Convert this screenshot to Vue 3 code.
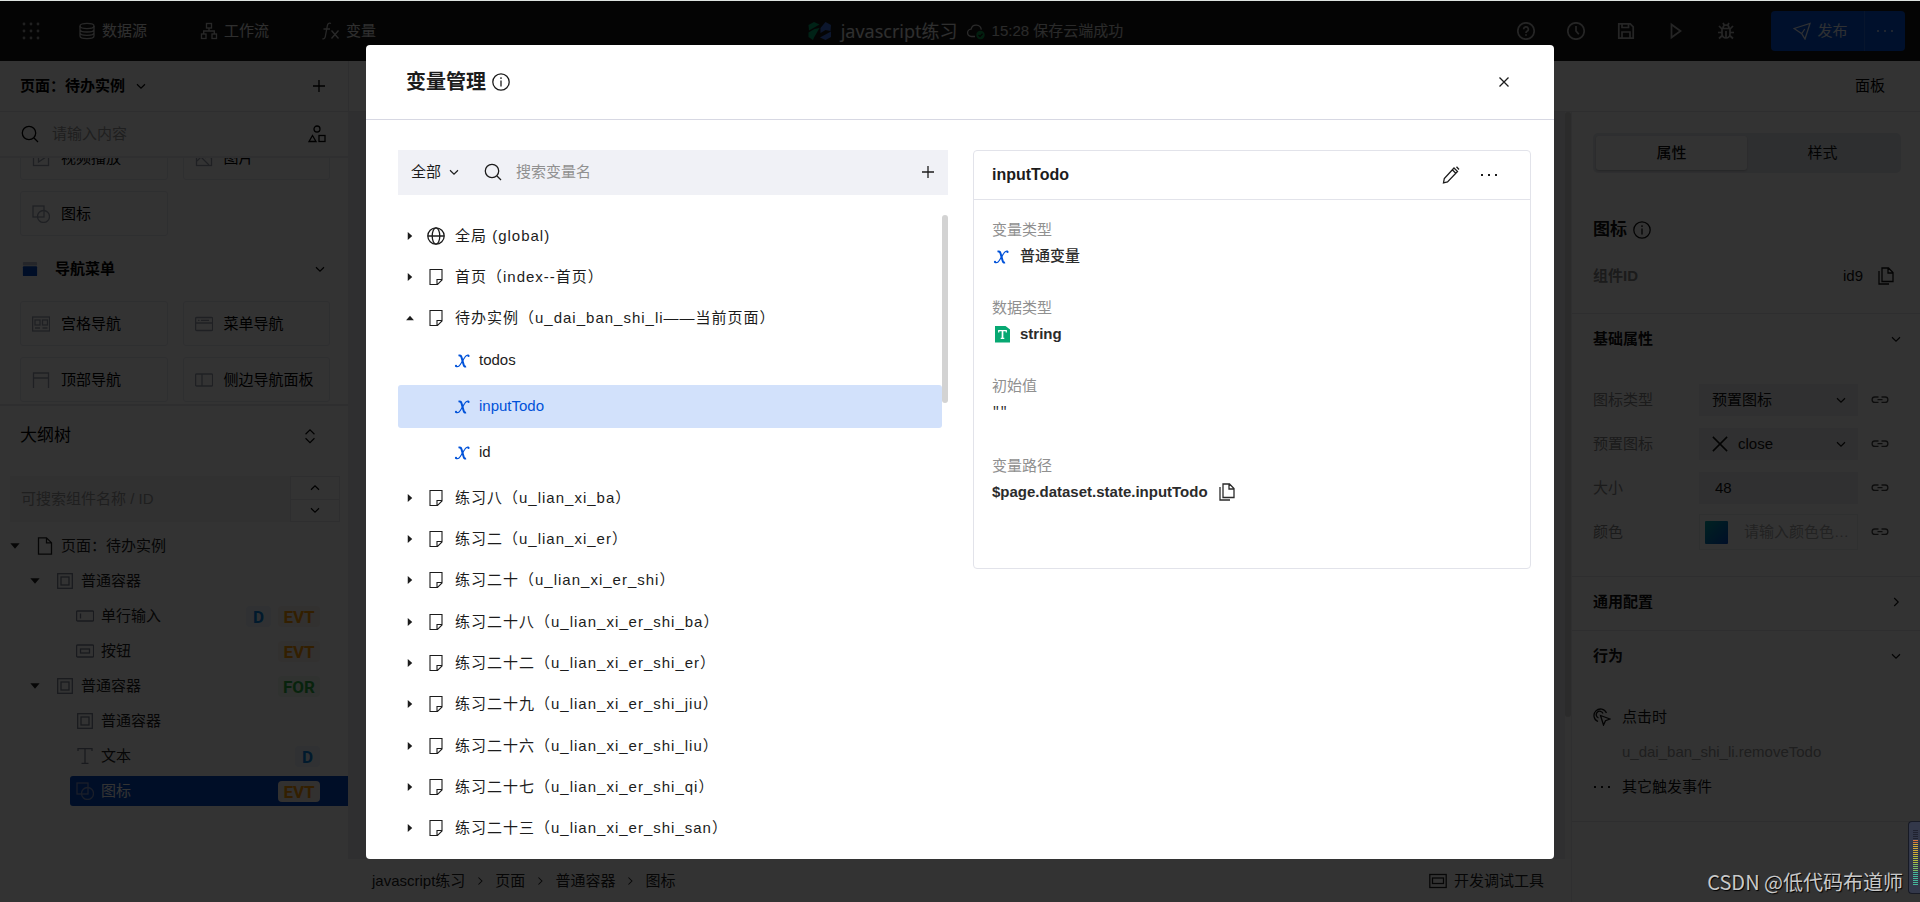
<script setup>
import { h, ref } from 'vue'

const paths = {
  apps: [2, 9, 16].flatMap(y => [2, 9, 16].map(x => `<circle cx="${x}" cy="${y}" r="1.4" fill="currentColor" stroke="none"/>`)).join(''),
  database: '<ellipse cx="9" cy="4" rx="7" ry="2.6"/><path d="M2 4v10c0 1.500 3 2.600 7 2.600s7-1.100 7-2.600V4M2 7.400c0 1.500 3 2.600 7 2.600s7-1.100 7-2.600M2 10.800c0 1.500 3 2.600 7 2.600s7-1.100 7-2.600"/>',
  flow: '<rect x="6.500" y="1.500" width="5" height="4.500"/><rect x="1.500" y="12" width="4.500" height="4.500"/><rect x="12" y="12" width="4.500" height="4.500"/><path d="M9 6v3M3.700 12V9h10.600v3"/>',
  fx: '<path d="M9 1.500c-2.200-.9-3.300.3-3.700 2.500L3.300 14.500c-.4 2-1.500 2.700-2.800 2.200M1.500 7h6.500M9.500 8.500l7 8M16.500 8.500l-7 8"/>',
  cloud: '<path d="M8 14.500H4.500a3.700 3.700 0 0 1-.4-7.400 5.200 5.200 0 0 1 10.200.6"/><circle cx="13.500" cy="13" r="4.200" fill="#0abf5b" stroke="none"/><path stroke="#111" d="M11.500 13l1.500 1.500 2.600-2.800"/>',
  help: '<circle cx="9" cy="9" r="8.200"/><path d="M6.700 7.200a2.300 2.300 0 1 1 3.300 2c-.7.400-1 .8-1 1.700M9 12.300v1.500"/>',
  clock: '<circle cx="9" cy="9" r="8.200"/><path d="M9 4v5l2.800 3.300"/>',
  save: '<path d="M1.800 1.800h11.400l3 3v11.400H1.800zM5 1.800v3.700h6.500V1.800M5 16v-6h8v6"/>',
  play: '<path d="M4.500 2.500l9 6.500-9 6.500z"/>',
  bug: '<path d="M5 6.500h8v5.500a4 4 0 0 1-8 0zM6 6a3 3 0 0 1 6 0M9 9v7M1 10.500h4M13 10.500h4M2 4l3 3M16 4l-3 3M2 16.500l3.300-3M16 16.500l-3.300-3M6 1l1.200 2M12 1l-1.200 2"/>',
  send: '<path d="M1 6.500L17 1.500l-5 15.500-3.200-5.200L1 6.500zM8.800 11.500l3-4.500"/>',
  dots: '<g fill="currentColor" stroke="none"><rect x="1" y="8" width="2" height="2"/><rect x="8" y="8" width="2" height="2"/><rect x="15" y="8" width="2" height="2"/></g>',
  down: '<path d="M4.500 7l4.500 4.500L13.500 7"/>',
  up: '<path d="M4.500 11L9 6.500l4.500 4.500"/>',
  right: '<path d="M7 4.500l4.500 4.500L7 13.500"/>',
  updown: '<path d="M4 7l5-5 5 5M4 11.500l5 5 5-5"/>',
  plus: '<path d="M9 3v12M3 9h12"/>',
  close: '<path d="M4.500 4.500l9 9M13.500 4.500l-9 9"/>',
  cross: '<path d="M1 1l16 16M17 1L1 17" stroke-width="1.700"/>',
  search: '<circle cx="8" cy="8" r="6.700"/><path d="M13 13l4 4"/>',
  shapes: '<circle cx="9" cy="4" r="3"/><path d="M4.500 10.500L8 16.500H1z"/><rect x="11" y="10.500" width="6" height="6"/>',
  video: '<rect x="1.500" y="1.500" width="15" height="15"/><path d="M6.500 5l6 4-6 4z"/>',
  image: '<rect x="1.500" y="1.500" width="15" height="15"/><path d="M2 12l4-4 8 8M10 9l3-3 3 3"/>',
  shape: '<rect x="1" y="1" width="11" height="11"/><circle cx="11.500" cy="11.500" r="6"/>',
  grid: '<rect x=".6" y="2" width="17" height="14"/><rect x="3" y="5" width="5" height="5"/><rect x="10.500" y="5" width="5" height="5"/><path d="M3 13h5M10.500 13h5"/>',
  menu: '<rect x=".6" y="2.500" width="17" height="13" rx="1"/><path d="M.6 8h17M3 5.300h1.500M6 5.300h8"/>',
  topnav: '<path d="M1.500 17V2h15v15M1.500 7h15"/>',
  sidenav: '<rect x=".6" y="3" width="17" height="12" rx="1"/><path d="M7 3v12"/>',
  page: '<path d="M2.500.8h8l5 5v11.400h-13zM10.500.8v5h5"/>',
  box: '<rect x="1.700" y="1.700" width="14.600" height="14.600"/><rect x="5" y="5" width="8" height="8"/>',
  input: '<rect x=".6" y="4" width="17" height="10" rx="1"/><path d="M4.500 6.500v5"/>',
  button: '<rect x=".6" y="3" width="17" height="12" rx="1"/><rect x="4.500" y="7" width="9" height="4"/>',
  text: '<path d="M2 4V1.700h14V4M9 1.700v14.600M5.500 16.300h7"/>',
  info: '<circle cx="9" cy="9" r="8.200"/><path d="M9 7.500v6M9 4.300v1.700"/>',
  copy: '<path d="M5 1h6.500L16 5.500v9H5zM11 1v5h5M2 4v13h10"/>',
  link: '<path d="M7.500 6H3.800a2.700 2.700 0 0 0 0 5.400H7.500M10.500 6h3.700a2.700 2.700 0 0 1 0 5.400H10.500M6.500 8.700h5"/>',
  click: '<path d="M5 13.500A6.500 6.500 0 1 1 13.500 5M5.500 10a3.500 3.500 0 1 1 4.500-4.500M7.500 7.500l9.500 3.500-4.500 1.700-2 4.300z"/>',
  globe: '<circle cx="9" cy="9" r="8.200"/><ellipse cx="9" cy="9" rx="3.800" ry="8.200"/><path d="M.8 9h16.400"/>',
  note: '<path stroke-width="1.100" d="M3 1.500h12v10.500L10.500 16.500H3zM10 16v-4.500h5"/>',
  edit: '<path d="M12 2l3.500 3.500L5.500 16l-4 1 .8-4.500zM14.500.8l2.500 2.700M10.500 4l3.300 3.300"/>',
  x: '<path stroke-width="2" d="M5.500 4.600c1.700-.6 2.500.1 3 1.700l2.200 7.700c.4 1.400 1.100 1.800 2.300 1.300"/><path stroke-width="1.200" d="M15.700 4.300c-1.500-.6-2.900.3-3.900 2L7.300 13.500c-1.200 2-2.700 2.700-4.500 1.900"/><circle cx="15.500" cy="4.900" r="1.100" fill="currentColor" stroke="none"/><circle cx="3" cy="14.900" r="1.100" fill="currentColor" stroke="none"/>',
  string: '<path stroke="none" fill="#07a872" d="M3 1h10.500L18 4.500V17.500H3z"/><path stroke="#fff" stroke-width="1.700" d="M10.500 6v7"/><path stroke="#fff" stroke-width="1.200" d="M6.700 7.600V5.700h7.600v1.900M8.700 13.300h3.600"/>',
  tri: '<path stroke="none" fill="currentColor" d="M2 5h14l-7 8z"/>',
  tool: '<rect x=".8" y="2.500" width="16.400" height="13"/><rect x="3.500" y="6" width="11" height="5.500"/>',
  logo: '<g stroke="none"><path fill="#00a870" d="M.5 3L6 0l5.500 2.500L1 8.500zM.5 10.500l6-3.500 5-1L6 15.500 5 18 .5 15z"/><path fill="#3d6fe0" d="M12.500 6L17.500 0l5.500 3-.5 6-5-1-5 3zM12 15.500l11-6V15l-5.500 3z"/></g>',
  drawer: '<g stroke="none"><rect x="1" y="1" width="16" height="4" rx="1" fill="#b9bdd0"/><rect x="1" y="6" width="16" height="11" rx="1" fill="#0045c4"/></g>',
}

const Icon = (p) => h('svg', {
  width: p.w || p.size || 18, height: p.size || 18, viewBox: `0 0 ${p.w || 18} 18`,
  fill: 'none', stroke: 'currentColor', 'stroke-width': 1.3, 'aria-hidden': 'true', innerHTML: paths[p.name],
})
Icon.props = ['name', 'size', 'w']

const navs = [['database', '数据源'], ['flow', '工作流'], ['fx', '变量']]
const tools = [['help', '帮助'], ['clock', '历史'], ['save', '保存'], ['play', '预览'], ['bug', '调试']]
const media = [['video', '视频播放'], ['image', '图片'], ['shape', '图标']]
const navCards = [['grid', '宫格导航'], ['menu', '菜单导航'], ['topnav', '顶部导航'], ['sidenav', '侧边导航面板']]
const outline = [
  { level: 0, icon: 'page', text: '页面：待办实例', open: true },
  { level: 1, icon: 'box', text: '普通容器', open: true },
  { level: 2, icon: 'input', text: '单行输入', tags: ['D', 'EVT'] },
  { level: 2, icon: 'button', text: '按钮', tags: ['EVT'] },
  { level: 1, icon: 'box', text: '普通容器', open: true, tags: ['FOR'] },
  { level: 2, icon: 'box', text: '普通容器' },
  { level: 2, icon: 'text', text: '文本', tags: ['D'] },
  { level: 2, icon: 'shape', text: '图标', tags: ['EVT'], selected: true },
]
const crumbs = ['javascript练习', '页面', '普通容器', '图标']
const selectedVar = ref('inputTodo')
const groups = [
  { icon: 'globe', text: '全局 (global)' },
  { icon: 'note', text: '首页（index--首页）' },
  { icon: 'note', text: '待办实例（u_dai_ban_shi_li——当前页面）', vars: ['todos', 'inputTodo', 'id'] },
  { icon: 'note', text: '练习八（u_lian_xi_ba）' },
  { icon: 'note', text: '练习二（u_lian_xi_er）' },
  { icon: 'note', text: '练习二十（u_lian_xi_er_shi）' },
  { icon: 'note', text: '练习二十八（u_lian_xi_er_shi_ba）' },
  { icon: 'note', text: '练习二十二（u_lian_xi_er_shi_er）' },
  { icon: 'note', text: '练习二十九（u_lian_xi_er_shi_jiu）' },
  { icon: 'note', text: '练习二十六（u_lian_xi_er_shi_liu）' },
  { icon: 'note', text: '练习二十七（u_lian_xi_er_shi_qi）' },
  { icon: 'note', text: '练习二十三（u_lian_xi_er_shi_san）' },
]
</script>

<template>
  <div class="app">
    <header class="header">
      <nav class="nav">
        <button class="apps" aria-label="应用"><Icon name="apps" /></button>
        <button v-for="n in navs" :key="n[1]" class="nav-item"><Icon :name="n[0]" />{{ n[1] }}</button>
      </nav>
      <div class="project">
        <Icon name="logo" w="24" />
        <span class="project-name">javascript练习</span>
        <Icon name="cloud" class="cloud" />
        <span class="saved">15:28 保存云端成功</span>
      </div>
      <div class="tools">
        <button v-for="t in tools" :key="t[0]" class="tool" :aria-label="t[1]"><Icon :name="t[0]" /></button>
        <div class="publish">
          <button class="publish-main"><Icon name="send" />发布</button>
          <button class="publish-more" aria-label="更多"><Icon name="dots" /></button>
        </div>
      </div>
    </header>

    <div class="body">
      <aside class="left">
        <div class="page-row">
          <button class="page-name">页面：待办实例 <Icon name="down" size="16" /></button>
          <button aria-label="新建页面"><Icon name="plus" /></button>
        </div>
        <div class="find-row">
          <Icon name="search" />
          <input aria-label="搜索组件" placeholder="请输入内容">
          <button aria-label="组件"><Icon name="shapes" /></button>
        </div>
        <div class="library">
          <div class="cards media">
            <button v-for="c in media" :key="c[1]" class="card"><Icon :name="c[0]" />{{ c[1] }}</button>
          </div>
          <button class="section"><Icon name="drawer" size="16" /><span>导航菜单</span><Icon name="down" size="16" /></button>
          <div class="cards">
            <button v-for="c in navCards" :key="c[1]" class="card"><Icon :name="c[0]" />{{ c[1] }}</button>
          </div>
        </div>
        <div class="outline-head">
          <span>大纲树</span>
          <button aria-label="展开"><Icon name="updown" size="16" /></button>
        </div>
        <div class="outline-find">
          <input aria-label="搜索大纲" placeholder="可搜索组件名称 / ID">
          <div class="stepper">
            <button aria-label="上一个"><Icon name="up" size="16" /></button>
            <button aria-label="下一个"><Icon name="down" size="16" /></button>
          </div>
        </div>
        <ul class="outline">
          <li v-for="(o, i) in outline" :key="i" :class="['level' + o.level, { selected: o.selected }]">
            <Icon v-if="o.open" name="tri" size="12" class="tri" />
            <Icon :name="o.icon" class="kind" />
            <span class="label">{{ o.text }}</span>
            <span v-for="t in o.tags" :key="t" class="tag" :class="'tag-' + t">{{ t }}</span>
          </li>
        </ul>
      </aside>

      <div class="main">
        <div class="toolbar"><button>面板</button></div>
        <div class="work">
          <section class="center">
            <div class="canvas"><div class="canvas-bar"><div class="canvas-thumb"></div></div></div>
            <footer class="footer">
              <nav class="crumbs">
                <template v-for="(c, i) in crumbs" :key="c">
                  <Icon v-if="i" name="right" size="14" />
                  <a href="#">{{ c }}</a>
                </template>
              </nav>
              <button class="devtool"><Icon name="tool" />开发调试工具</button>
            </footer>
          </section>

          <aside class="props">
            <div class="ident">
              <div class="tabs"><button class="on">属性</button><button>样式</button></div>
              <h2>图标 <Icon name="info" /></h2>
              <div class="id-row"><strong>组件ID</strong><span>id9</span><button aria-label="复制"><Icon name="copy" /></button></div>
            </div>
            <div class="block basic">
              <button class="block-head">基础属性<Icon name="down" size="16" /></button>
              <div class="field">
                <label for="kind">图标类型</label>
                <div class="control"><select id="kind"><option>预置图标</option></select><Icon name="down" size="16" class="caret" /></div>
                <Icon name="link" class="link" />
              </div>
              <div class="field">
                <label for="preset">预置图标</label>
                <div class="control"><Icon name="cross" size="16" class="preset" /><select id="preset" class="with-icon"><option>close</option></select><Icon name="down" size="16" class="caret" /></div>
                <Icon name="link" class="link" />
              </div>
              <div class="field">
                <label for="size">大小</label>
                <div class="control"><input id="size" value="48"></div>
                <Icon name="link" class="link" />
              </div>
              <div class="field">
                <label for="color">颜色</label>
                <div class="control color"><span class="swatch"></span><input id="color" placeholder="请输入颜色色值或变量"></div>
                <Icon name="link" class="link" />
              </div>
            </div>
            <div class="block common"><button class="block-head">通用配置<Icon name="right" size="16" /></button></div>
            <div class="block action">
              <button class="block-head">行为<Icon name="down" size="16" /></button>
              <button class="event"><Icon name="click" />点击时</button>
              <p class="handler">u_dai_ban_shi_li.removeTodo</p>
              <button class="event"><Icon name="dots" />其它触发事件</button>
            </div>
          </aside>
        </div>
      </div>
    </div>

    <div class="overlay">
      <div class="modal" role="dialog" aria-modal="true" aria-labelledby="modal-title">
        <header class="modal-head">
          <h1 id="modal-title">变量管理</h1><Icon name="info" />
          <button class="close" aria-label="关闭"><Icon name="close" /></button>
        </header>
        <div class="modal-body">
          <section class="vars">
            <div class="vars-find">
              <button class="scope">全部<Icon name="down" size="16" /></button>
              <Icon name="search" />
              <input aria-label="搜索变量名" placeholder="搜索变量名">
              <button aria-label="新建变量"><Icon name="plus" /></button>
            </div>
            <div class="list-wrap">
              <ul class="list">
                <li v-for="g in groups" :key="g.text">
                  <div class="group">
                    <Icon name="tri" size="10" :class="g.vars ? 'opened' : 'folded'" />
                    <Icon :name="g.icon" />
                    <span>{{ g.text }}</span>
                  </div>
                  <button v-for="v in g.vars" :key="v" class="var" :class="{ on: v === selectedVar }" @click="selectedVar = v">
                    <Icon name="x" />{{ v }}
                  </button>
                </li>
              </ul>
              <div class="thumb"></div>
            </div>
          </section>

          <section class="detail">
            <div class="detail-head">
              <h3>inputTodo</h3>
              <button aria-label="编辑"><Icon name="edit" /></button>
              <button aria-label="更多"><Icon name="dots" /></button>
            </div>
            <dl>
              <div><dt>变量类型</dt><dd class="kind-name"><Icon name="x" class="blue" />普通变量</dd></div>
              <div><dt>数据类型</dt><dd><Icon name="string" />string</dd></div>
              <div class="initial"><dt>初始值</dt><dd class="mono">""</dd></div>
              <div><dt>变量路径</dt><dd>$page.dataset.state.inputTodo<button aria-label="复制路径"><Icon name="copy" /></button></dd></div>
            </dl>
          </section>
        </div>
      </div>
    </div>

    <div class="meter"><i v-for="n in 28" :key="n" :class="{ off: n < 6, hot: n > 5 && n < 8, warm: n > 7 && n < 14, lime: n > 13 && n < 18, green: n > 17 && n < 22 }"></i></div>
    <div class="watermark">CSDN @低代码布道师</div>
  </div>
</template>

<style>
html, body { margin: 0; background: #333; }
</style>

<style scoped>
* { box-sizing: border-box; }
.app {
  height: 100vh; display: flex; flex-direction: column; overflow: hidden; position: relative;
  border-top: 1px solid #dde3e0; color: #000; background: #fff;
  font: 15px/20px "Liberation Sans", "Noto Sans CJK SC", sans-serif;
}
button, input, select { font: inherit; color: inherit; background: none; border: 0; padding: 0; margin: 0; outline: 0; min-width: 0; }
button { display: inline-flex; align-items: center; cursor: pointer; text-align: left; white-space: nowrap; }
svg { flex: none; display: block; }
ul, dl, dd, h1, h2, h3, p { margin: 0; padding: 0; list-style: none; }
a { color: inherit; text-decoration: none; }
select { appearance: none; }

.header { flex: none; height: 60px; padding: 0 15px 0 22px; background: #181818; color: #fff; display: grid; grid-template-columns: 1fr auto 1fr; align-items: center; }
.nav { display: flex; }
.apps { margin-right: 38px; opacity: .6; }
.nav-item { gap: 6px; margin-right: 53px; opacity: .9; }
.nav-item svg { opacity: .85; }
.project { display: flex; align-items: center; padding-left: 4px; }
.project-name { margin: 0 9px 0 9px; font-size: 18px; font-family: "Noto Sans", "Noto Sans CJK SC", sans-serif; opacity: .9; }
.cloud { margin-right: 7px; opacity: .8; }
.saved { opacity: .8; }
.tools { display: flex; align-items: center; justify-content: flex-end; }
.tool { margin-right: 32px; opacity: .7; }
.tool svg { stroke-width: 1.7; }
.publish { display: flex; height: 40px; background: #0052d9; border-radius: 4px; margin-left: 4px; overflow: hidden; }
.publish-main { width: 94px; justify-content: center; gap: 6px; padding-left: 6px; border-right: 1px solid #2b6be0; opacity: .9; }
.publish-more { width: 40px; justify-content: center; opacity: .6; }

.body { flex: 1; min-height: 0; display: flex; }
.left { flex: none; width: 348px; display: flex; flex-direction: column; }
.page-row { flex: none; height: 51px; border-bottom: 1px solid #e3e5ea; padding: 0 20px; display: flex; justify-content: space-between; align-items: center; font-weight: 700; }
.page-name { gap: 8px; }
.find-row { flex: none; height: 46px; padding: 0 22px 0 21px; display: flex; align-items: center; border-bottom: 2px solid #e9ebef; }
.find-row input { flex: 1; margin-left: 13px; }
.find-row input::placeholder, .outline-find input::placeholder { color: #999; opacity: 1; }
.library { flex: none; height: 248px; overflow: hidden; padding: 0 18px 0 20px; border-bottom: 2px solid #e3e5ea; }
.cards { display: grid; grid-template-columns: 1fr 1fr; gap: 11px 15px; }
.media { margin-top: -23px; }
.card { height: 45px; border: 1px solid #e6e8ed; border-radius: 3px; padding: 0 11px; gap: 11px; }
.card svg { color: #9aa0b0; }
.section { width: 100%; height: 65px; padding: 0 2px; gap: 17px; font-weight: 700; }
.section span { flex: 1; }
.outline-head { flex: none; height: 70px; padding: 0 30px 10px 20px; display: flex; align-items: center; justify-content: space-between; font-size: 17px; }
.outline-find { flex: none; height: 46px; margin: 0 8px 0 10px; display: flex; background: #f3f4f6; }
.outline-find input { flex: 1; padding-left: 11px; }
.stepper { width: 50px; display: flex; flex-direction: column; background: #fff; border: 1px solid #e3e5ea; }
.stepper button { flex: 1; justify-content: center; }
.stepper button + button { border-top: 1px solid #e3e5ea; }
.outline { padding-top: 9px; }
.outline li { height: 30px; margin-bottom: 5px; padding: 0 28px 0 6px; display: flex; align-items: center; gap: 7px; color: #222; }
.outline .level0 { padding-left: 9px; }
.outline .level1 { padding-left: 29px; }
.outline .level2 { margin-left: 70px; }
.tri { margin-right: 8px; }
.kind { color: #7d8394; }
.level0 .kind { color: #222; }
.label { flex: 1; }
.outline .selected { background: #0045c4; color: #fff; border-radius: 3px 0 0 3px; }
.selected .kind { color: #8296c8; }
.tag { height: 21px; padding: 0 5px; border-radius: 4px; font: 700 17px/22px Roboto, sans-serif; text-align: center; }
.tag-D { width: 25px; color: #0584e0; background: #edf4fc; }
.tag-EVT { width: 42px; color: #ff9d00; background: #fbf2ee; }
.tag-FOR { width: 42px; color: #29b041; background: #eef8f0; }

.main { flex: 1; min-width: 0; display: flex; flex-direction: column; }
.toolbar { flex: none; height: 51px; border-bottom: 1px solid #e3e5ea; border-left: 1px solid #e3e5ea; padding-right: 35px; display: flex; justify-content: flex-end; }
.work { flex: 1; min-height: 0; display: flex; }
.center { flex: 1; display: flex; flex-direction: column; border-right: 1px solid #e9ebef; }
.canvas { flex: 1; display: flex; justify-content: flex-end; background: #ebecf0; }
.canvas-bar { width: 6px; background: #f7f7f7; }
.canvas-thumb { height: 81%; background: #d6d6d6; border-radius: 3px; }
.footer { flex: none; height: 43px; padding: 0 27px 0 24px; display: flex; justify-content: space-between; align-items: center; color: #222; }
.crumbs { display: flex; align-items: center; gap: 8px; }
.devtool { gap: 7px; }

.props { flex: none; width: 348px; color: #111; }
.ident { height: 202px; padding: 21px 19px 0 21px; border-bottom: 1px solid #e3e5ea; }
.tabs { display: flex; height: 40px; padding: 3px; background: #e6e9ef; border-radius: 5px; }
.tabs button { flex: 1; justify-content: center; }
.tabs .on { background: #fff; border-radius: 3px; font-weight: 500; box-shadow: 0 1px 2px #0003; }
h2 { margin-top: 45px; height: 24px; display: flex; align-items: center; gap: 6px; font-size: 17px; }
.id-row { margin-top: 24px; display: flex; align-items: center; }
.id-row strong { flex: 1; color: #888; }
.id-row button { margin: 0 6px 0 14px; }
.block { padding: 0 16px 3px 21px; border-bottom: 1px solid #e3e5ea; }
.block-head { width: 100%; height: 50px; justify-content: space-between; font-weight: 700; }
.basic { height: 263px; }
.basic .block-head { margin-bottom: 14px; }
.field { height: 44px; display: flex; align-items: center; }
.field label { width: 106px; color: #888; }
.link { color: #444; }
.control { position: relative; width: 159px; height: 32px; background: #eff0f2; display: flex; align-items: center; margin-right: 13px; }
.control select { width: 100%; height: 100%; padding-left: 13px; }
.control .with-icon { padding-left: 10px; }
.control input { flex: 1; width: 100%; padding-left: 16px; text-overflow: ellipsis; }
.preset { margin-left: 13px; }
.caret { position: absolute; right: 9px; pointer-events: none; }
.color { background: #fff; border: 1px solid #eceef1; height: 36px; }
.swatch { flex: none; width: 23px; height: 23px; margin-left: 5px; background: linear-gradient(135deg, #00a7a7, #0048c4); border-radius: 1px; }
.color input { margin-right: 4px; }
.color input::placeholder { color: #aaa; opacity: 1; }
.action { height: 191px; }
.action .block-head { margin-bottom: 18px; }
.event { height: 35px; gap: 11px; width: 100%; }
.handler { height: 35px; padding-left: 29px; line-height: 35px; color: #999; }

.overlay { position: absolute; inset: 0; background: rgba(0, 0, 0, .8); display: flex; justify-content: center; padding: 44px 20px 43px; }
.modal { width: 100%; max-width: 1188px; background: #fff; border-radius: 4px; color: #1c1c1c; display: flex; flex-direction: column; overflow: hidden; }
.modal-head { flex: none; height: 75px; border-bottom: 1px solid #d7d8e3; padding: 0 41px 0 40px; display: flex; align-items: center; gap: 6px; }
h1 { font-size: 20px; line-height: 28px; }
.close { margin-left: auto; }
.modal-body { flex: 1; min-height: 0; display: grid; grid-template-columns: 550fr 558fr; gap: 25px; padding: 30px 23px 0 32px; align-items: start; }
.vars { height: 100%; min-height: 0; display: flex; flex-direction: column; }
.vars-find { flex: none; height: 45px; background: #f0f1f6; display: flex; align-items: center; padding: 0 11px 2px 13px; }
.scope { gap: 5px; margin-right: 22px; }
.vars-find input { flex: 1; margin-left: 14px; }
.vars-find input::placeholder { color: #909090; opacity: 1; }
.list-wrap { flex: 1; min-height: 0; margin-top: 20px; display: flex; overflow: hidden; }
.list { flex: 1; display: flex; flex-direction: column; justify-content: space-between; padding-bottom: 10px; }
.thumb { width: 6px; height: 188px; border-radius: 3px; background: #d3d3d3; }
.group { height: 41px; display: flex; align-items: center; padding-left: 7px; letter-spacing: 1px; }
.group svg + svg { margin: 0 10px 0 12px; }
.folded { transform: rotate(-90deg); }
.opened { transform: rotate(180deg); }
.var { width: 100%; height: 43px; margin-bottom: 3px; padding-left: 55px; gap: 8px; border-radius: 3px; }
.var svg, .blue { color: #0052d9; }
.var.on { background: #d2e1fb; color: #0052d9; }
.detail { height: 419px; border: 1px solid #e2e3ea; border-radius: 4px; }
.detail-head { height: 49px; border-bottom: 1px solid #e2e3ea; padding: 0 32px 0 18px; display: flex; align-items: center; gap: 20px; }
h3 { flex: 1; font-size: 16px; }
dl { padding: 17px 18px; }
dl > div { height: 78px; }
dl .initial { height: 80px; }
dt { color: #909090; height: 26px; line-height: 26px; }
dd { height: 26px; display: flex; align-items: center; gap: 10px; font-weight: 700; color: #2b2b2b; }
dd.kind-name { font-weight: 500; }
dd .blue { color: #0052d9; }
.mono { font: 400 13px/20px "Liberation Mono", monospace; }

.watermark { position: absolute; right: 17px; bottom: 6px; font: 20px/28px "Noto Sans CJK SC", sans-serif; color: #c9c9c9; text-shadow: 1px 1px 1px #000; }
.meter { position: absolute; right: 0; bottom: 8px; width: 12px; height: 73px; padding: 8px 2px 0 4px; background: #33384a; border: 1px solid #171a25; border-right: 0; border-radius: 4px 0 0 4px; display: flex; flex-direction: column; gap: 1px; }
.meter i { height: 1px; flex: none; background: #45b69a; }
.meter .off { background: #1f2230; }
.meter .hot { background: #d9783c; }
.meter .warm { background: #d1ac35; }
.meter .lime { background: #b2bd3c; }
.meter .green { background: #7dbb61; }
</style>
